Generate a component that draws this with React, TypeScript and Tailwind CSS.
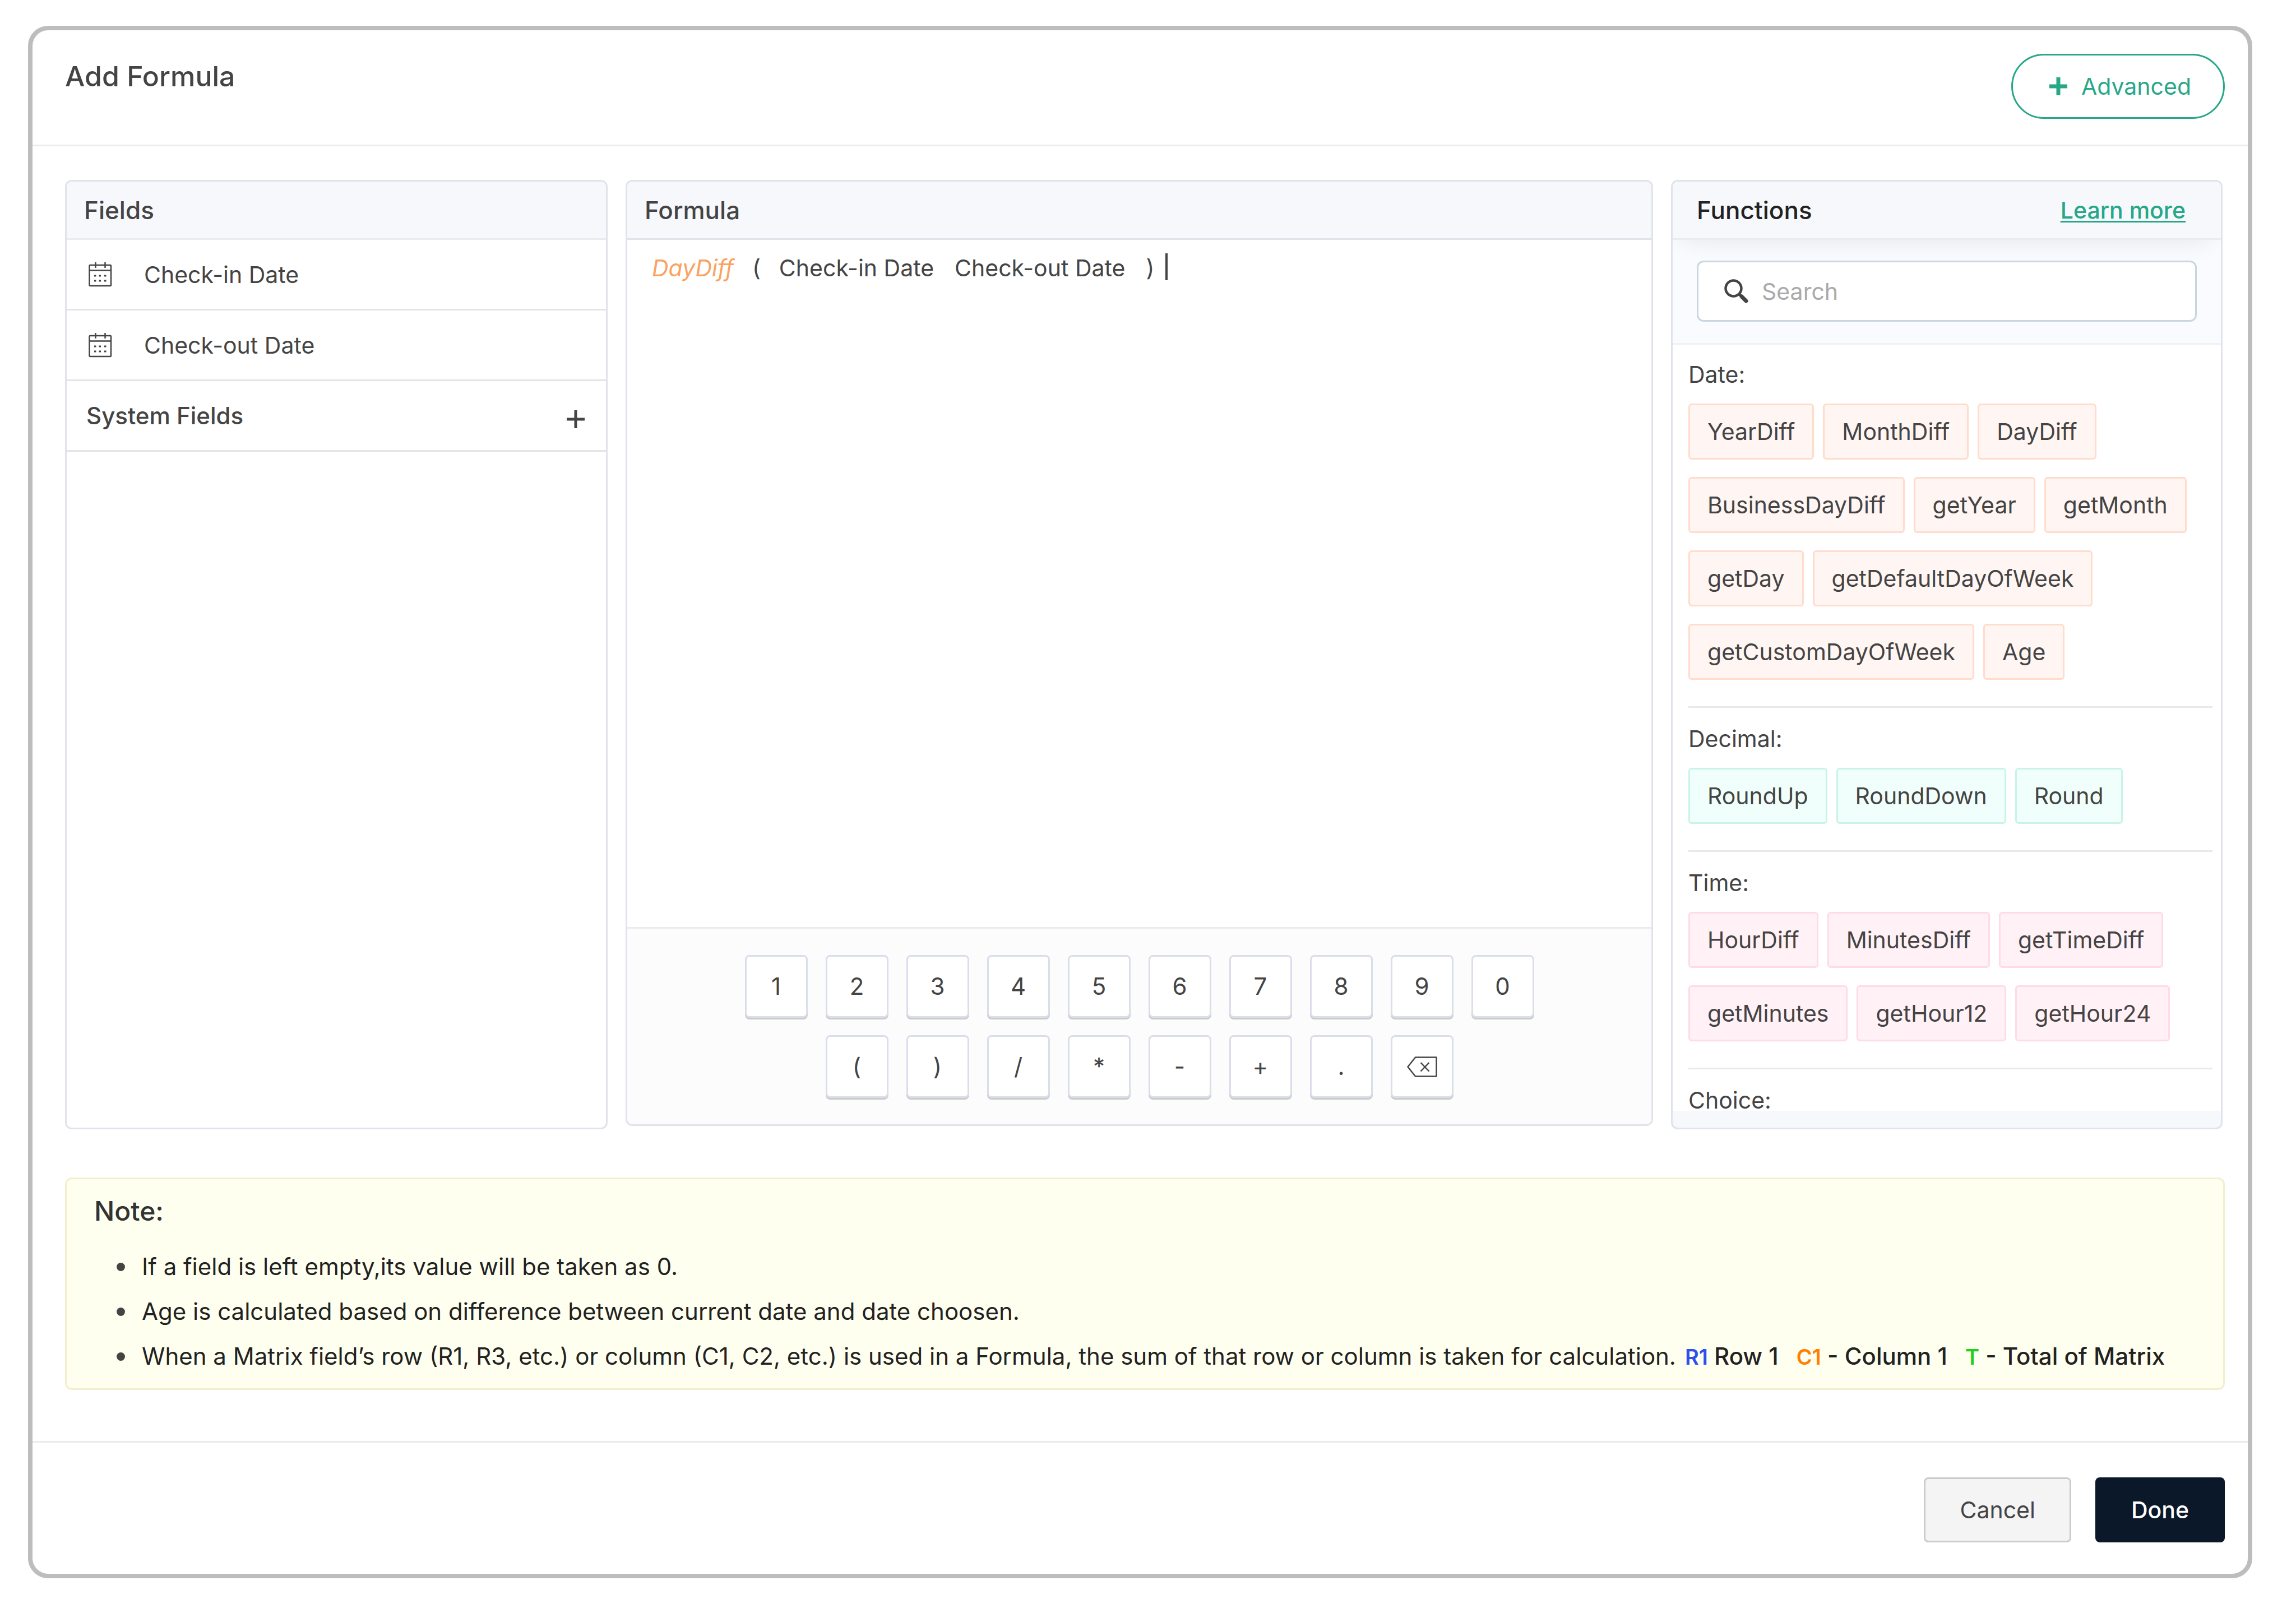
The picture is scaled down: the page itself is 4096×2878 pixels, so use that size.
import React from 'react';

type Tone = 'orange' | 'green' | 'pink';

interface FunctionGroup {
    title: string;
    tone: Tone;
    rows: string[][];
}

const toneClasses: Record<Tone, string> = {
    orange: 'bg-[#fff5f2] border-[#ffdccb]',
    green: 'bg-[#f0fffb] border-[#c9f3e7]',
    pink: 'bg-[#fff1f6] border-[#ffdbe7]',
};

const functionGroups: FunctionGroup[] = [
    {
        title: 'Date:',
        tone: 'orange',
        rows: [
            ['YearDiff', 'MonthDiff', 'DayDiff'],
            ['BusinessDayDiff', 'getYear', 'getMonth'],
            ['getDay', 'getDefaultDayOfWeek'],
            ['getCustomDayOfWeek', 'Age'],
        ],
    },
    { title: 'Decimal:', tone: 'green', rows: [['RoundUp', 'RoundDown', 'Round']] },
    {
        title: 'Time:',
        tone: 'pink',
        rows: [
            ['HourDiff', 'MinutesDiff', 'getTimeDiff'],
            ['getMinutes', 'getHour12', 'getHour24'],
        ],
    },
];

const fields = ['Check-in Date', 'Check-out Date'];
const digitKeys = ['1', '2', '3', '4', '5', '6', '7', '8', '9', '0'];
const operatorKeys = ['(', ')', '/', '*', '-', '+', '.'];

const App: React.FC = () => {
    return (
        <div className="min-h-screen bg-white pt-[46px] pr-[78px] pb-[46px] pl-[50px] font-['Inter',sans-serif] text-[41px] leading-[60px] text-[#444]">
            <main className="rounded-[36px] border-8 border-[#bcbdbf] bg-white">
                <header className="flex h-[207px] items-start justify-between border-b-3 border-[#ebebeb] pt-[42px] pr-[41px] pl-[58px]">
                    <h1 className="pt-[10px] text-[50px] font-medium">Add Formula</h1>
                    <button className="flex h-[116px] items-center gap-6 rounded-full border-3 border-[#26a788] pr-[57px] pl-[64px] text-[#26a788]">
                        <PlusIcon className="size-[34px]" strokeWidth={7} />
                        Advanced
                    </button>
                </header>

                <div className="pr-[45px] pl-[58px]">
                    <div className="flex items-start gap-8 pt-[60px]">
                        <FieldsPanel />
                        <FormulaPanel />
                        <FunctionsPanel />
                    </div>
                    <Note />
                </div>

                <footer className="flex justify-end gap-[43px] border-t-3 border-[#ebebeb] pt-[62px] pr-[41px] pb-[56px]">
                    <button className="h-[116px] rounded-lg border-3 border-[#cbcbcb] bg-[#f4f4f4] px-[61px]">Cancel</button>
                    <button className="h-[116px] rounded-lg bg-[#0b1829] px-[64px] font-medium text-white">Done</button>
                </footer>
            </main>
        </div>
    );
};

const FieldsPanel: React.FC = () => (
    <section className="h-[1694px] w-[968px] shrink-0 overflow-hidden rounded-xl border-3 border-[#e0e3eb]">
        <h2 className="flex h-[104px] items-center border-b-3 border-[#ebebeb] bg-[#f7f8fc] px-[31px] text-[44px] font-medium">
            Fields
        </h2>
        <ul>
            {fields.map((field) => (
                <li key={field} className="flex h-[126px] items-center border-b-3 border-[#e4e4e4] px-[39px]">
                    <CalendarIcon className="mr-[57px] h-[44px] w-[42px]" />
                    {field}
                </li>
            ))}
        </ul>
        <button className="flex h-[126px] w-full items-center justify-between border-b-3 border-[#e4e4e4] pr-[37px] pl-[35px] text-[42px] font-medium">
            System Fields
            <PlusIcon className="mt-3 size-[34px]" strokeWidth={5} />
        </button>
    </section>
);

const FormulaPanel: React.FC = () => (
    <section className="flex h-[1688px] grow flex-col overflow-hidden rounded-xl border-3 border-[#e0e3eb]">
        <h2 className="flex h-[104px] shrink-0 items-center border-b-3 border-[#e0e3eb] bg-[#f7f8fc] px-[31px] text-[44px] font-medium">
            Formula
        </h2>
        <div className="flex grow items-start px-[44px] pt-[20px]">
            <em className="mr-[33px] text-[#f9a262]">DayDiff</em>
            <span className="mr-[33px]">(</span>
            <span className="mr-[37px]">Check-in Date</span>
            <span className="mr-[37px]">Check-out Date</span>
            <span>)</span>
            <span className="mt-1 ml-[20px] h-[48px] w-[4px] bg-[#444]" />
        </div>
        <div className="flex h-[352px] flex-col items-center gap-[31px] border-t-3 border-[#e8ebf2] bg-[#fcfcfd] pt-[47px]">
            <div className="flex gap-8">
                {digitKeys.map((label) => (
                    <Key key={label}>{label}</Key>
                ))}
            </div>
            <div className="flex gap-8">
                {operatorKeys.map((label) => (
                    <Key key={label}>{label}</Key>
                ))}
                <Key label="Backspace">
                    <BackspaceIcon className="h-[37px] w-[54px]" />
                </Key>
            </div>
        </div>
    </section>
);

const FunctionsPanel: React.FC = () => (
    <section className="flex h-[1694px] w-[984px] shrink-0 flex-col overflow-hidden rounded-xl border-3 border-[#e0e3eb] bg-[#f7f8fc] pb-[30px]">
        <div className="z-10 flex h-[104px] shrink-0 items-center justify-between border-b-3 border-[#ebebeb] bg-[#f7f8fc] pr-[63px] pl-[43px] font-medium shadow-[0_20px_40px_-16px_rgba(0,0,0,0.08)]">
            <h2 className="text-[44px] text-[#222]">Functions</h2>
            <a href="#" className="text-[#26a788] underline decoration-3 underline-offset-4">
                Learn more
            </a>
        </div>
        <div className="shrink-0 border-b-3 border-[#eff1f3] bg-[#fafbfe] px-[43px] pt-[37px] pb-[38px]">
            <label className="flex h-[109px] items-center rounded-xl border-3 border-[#cad5e2] bg-white pl-[46px]">
                <SearchIcon className="mr-[21px] size-[46px] shrink-0" />
                <input
                    type="text"
                    aria-label="Search"
                    placeholder="Search"
                    className="w-full bg-transparent outline-none placeholder:text-[#aaa]"
                />
            </label>
        </div>
        <div className="grow overflow-hidden bg-white pr-[15px] pl-[28px]">
            {functionGroups.map((group) => (
                <div key={group.title} className="border-b-3 border-[#e9e9e9] pt-[39px] pb-[47px] first:pt-[37px]">
                    <h3 className="leading-8">{group.title}</h3>
                    <div className="flex flex-col gap-[31px] pt-9">
                        {group.rows.map((row) => (
                            <div key={row[0]} className="flex gap-4">
                                {row.map((name) => (
                                    <button
                                        key={name}
                                        className={`h-[100px] rounded-md border-3 px-[31px] ${toneClasses[group.tone]}`}
                                    >
                                        {name}
                                    </button>
                                ))}
                            </div>
                        ))}
                    </div>
                </div>
            ))}
            <h3 className="pt-[39px] leading-8">Choice:</h3>
        </div>
    </section>
);

const Note: React.FC = () => (
    <section className="mt-[86px] mr-[-4px] mb-[91px] h-[379px] rounded-xl border-3 border-[#f2efcf] bg-[#ffffef] pt-[27px] pl-[49px] text-[42px] text-[#222]">
        <h2 className="text-[48px] font-medium text-[#333]">Note:</h2>
        <ul className="flex flex-col gap-[20px] pt-[39px]">
            <NoteItem>If a field is left empty,its value will be taken as 0.</NoteItem>
            <NoteItem>Age is calculated based on difference between current date and date choosen.</NoteItem>
            <NoteItem>
                When a Matrix field’s row (R1, R3, etc.) or column (C1, C2, etc.) is used in a Formula, the sum of that row or
                column is taken for calculation.
                <span className="ml-[16px] font-medium">
                    <b className="text-[38px] font-semibold text-[#2b50ed]">R1</b> Row 1
                </span>
                <span className="ml-[32px] font-medium">
                    <b className="text-[38px] font-semibold text-[#ff8000]">C1</b> - Column 1
                </span>
                <span className="ml-[32px] font-medium">
                    <b className="text-[38px] font-semibold text-[#1fd01f]">T</b> - Total of Matrix
                </span>
            </NoteItem>
        </ul>
    </section>
);

const NoteItem: React.FC<{ children: React.ReactNode }> = ({ children }) => (
    <li className="flex items-center pl-[40px] whitespace-nowrap">
        <span className="mr-[30px] size-[15px] shrink-0 rounded-full bg-[#444]" />
        <span>{children}</span>
    </li>
);

const Key: React.FC<{ children: React.ReactNode; label?: string }> = ({ children, label }) => (
    <button
        aria-label={label}
        className="flex size-[112px] items-center justify-center rounded-lg border-3 border-[#dadeea] bg-white text-[42px] shadow-[0_3px_0_#cbcbcb]"
    >
        {children}
    </button>
);

const PlusIcon = (props: React.SVGProps<SVGSVGElement>) => (
    <svg viewBox="0 0 34 34" fill="none" stroke="currentColor" {...props}>
        <path d="M17 1v32M1 17h32" />
    </svg>
);

const CalendarIcon = (props: React.SVGProps<SVGSVGElement>) => (
    <svg viewBox="0 0 42 44" fill="none" stroke="currentColor" strokeWidth={2.5} {...props}>
        <rect x="1.5" y="5" width="38.5" height="37" rx="1.5" />
        <path d="M1.5 14.5h38.5M12.5 0v10M29.5 0v10" />
        <path d="M10 24h3.5M18.5 24h3.5M28 24h3.5M10 33h3.5M18.5 33h3.5M28 33h3.5" strokeWidth={3} />
    </svg>
);

const SearchIcon = (props: React.SVGProps<SVGSVGElement>) => (
    <svg viewBox="0 0 46 46" fill="none" stroke="currentColor" {...props}>
        <circle cx="16.5" cy="17.5" r="14" strokeWidth={4.5} />
        <path d="M27 28l4 4" strokeWidth={5} />
        <path d="M31 32l8 8" strokeWidth={7} strokeLinecap="round" />
    </svg>
);

const BackspaceIcon = (props: React.SVGProps<SVGSVGElement>) => (
    <svg viewBox="0 0 54 37" fill="none" stroke="currentColor" strokeWidth={2.5} {...props}>
        <path d="M15 1.5h37.5v34H15L1.5 18.5z" strokeLinejoin="round" />
        <path d="M24.5 11l15 15.5M39.5 11l-15 15.5" />
    </svg>
);

export default App;
